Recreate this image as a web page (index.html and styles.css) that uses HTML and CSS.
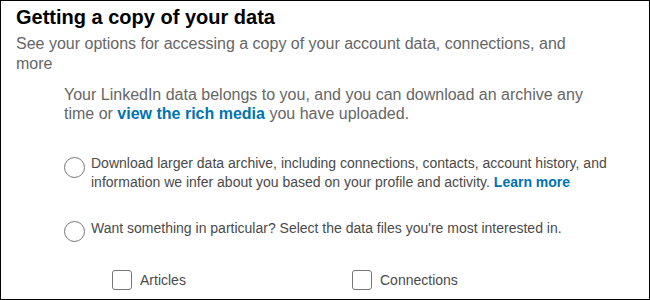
FILE: index.html
```html
<!DOCTYPE html>
<html>
<head>
<meta charset="utf-8">
<link rel="stylesheet" href="styles.css">
</head>
<body>
<div class="panel">
  <h1 class="title">Getting a copy of your data</h1>
  <p class="sub">See your options for accessing a copy of your account data, connections, and more</p>
  <p class="intro">Your LinkedIn data belongs to you, and you can download an archive any time or <a class="link" href="#">view the rich media</a> you have uploaded.</p>
  <div class="options">
    <label class="option option-first">
      <span class="radio"></span>
      <span class="option-text">Download larger data archive, including connections, contacts, account history, and information we infer about you based on your profile and activity. <a class="link" href="#">Learn more</a></span>
    </label>
    <label class="option option-second">
      <span class="radio"></span>
      <span class="option-text">Want something in particular? Select the data files you're most interested in.</span>
    </label>
  </div>
  <div class="checks">
    <label class="check"><span class="box"></span><span class="check-text">Articles</span></label>
    <label class="check"><span class="box"></span><span class="check-text">Connections</span></label>
  </div>
</div>
</body>
</html>
```
FILE: styles.css
```css
html, body {
  margin: 0;
  padding: 0;
  background: #fff;
}
.panel {
  width: 650px;
  height: 300px;
  box-sizing: border-box;
  border: 1px solid #000;
  padding: 4px 15px 0;
  overflow: hidden;
  font-family: "Liberation Sans", Arial, sans-serif;
}
.title {
  margin: 0;
  font-size: 20px;
  line-height: 24px;
  font-weight: bold;
  color: #000;
}
.sub {
  margin: 5px 0 0;
  font-size: 16px;
  line-height: 20px;
  color: #666;
  width: 560px;
}
.intro {
  margin: 11px 0 0 48px;
  font-size: 16px;
  line-height: 19px;
  color: #666;
  width: 540px;
}
.link {
  color: #0073b1;
  font-weight: bold;
  text-decoration: none;
}
.options {
  margin: 31px 0 0 48px;
  display: flex;
  flex-direction: column;
  gap: 27px;
}
.option {
  display: flex;
  align-items: flex-start;
  gap: 6px;
}
.radio {
  flex: none;
  width: 19px;
  height: 19px;
  border: 1px solid #777;
  border-radius: 50%;
  margin-top: 3px;
}
.option-second .radio {
  margin-top: 2px;
}
.option-text {
  font-size: 14px;
  line-height: 19px;
  color: #4a4a4a;
  width: 530px;
}
.checks {
  margin: 28px 0 0 96px;
  display: grid;
  grid-template-columns: 240px 240px;
}
.check {
  display: flex;
  align-items: center;
  gap: 8px;
}
.box {
  flex: none;
  width: 18px;
  height: 18px;
  border: 1px solid #777;
  border-radius: 3px;
}
.check-text {
  font-size: 14px;
  line-height: 20px;
  color: #4a4a4a;
}
```
